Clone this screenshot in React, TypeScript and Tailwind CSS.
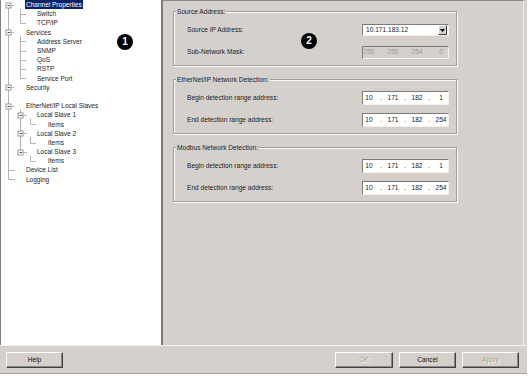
import { Fragment } from "react";

type TreeRow = { label: string; depth: number; selected?: boolean } | null;

const treeRows: TreeRow[] = [
  { label: "Channel Properties", depth: 0, selected: true },
  { label: "Switch", depth: 1 },
  { label: "TCP/IP", depth: 1 },
  { label: "Services", depth: 0 },
  { label: "Address Server", depth: 1 },
  { label: "SNMP", depth: 1 },
  { label: "QoS", depth: 1 },
  { label: "RSTP", depth: 1 },
  { label: "Service Port", depth: 1 },
  { label: "Security", depth: 0 },
  null,
  { label: "EtherNet/IP Local Slaves", depth: 0 },
  { label: "Local Slave 1", depth: 1 },
  { label: "Items", depth: 2 },
  { label: "Local Slave 2", depth: 1 },
  { label: "Items", depth: 2 },
  { label: "Local Slave 3", depth: 1 },
  { label: "Items", depth: 2 },
  { label: "Device List", depth: 0 },
  { label: "Logging", depth: 0 },
];

const ROW = 9.2;
const cy = (i: number) => Math.round(ROW * i + ROW / 2) + 0.5;

function ExpandBox({ x, y }: { x: number; y: number }) {
  return (
    <g>
      <rect x={x - 2.5} y={y - 2.5} width={5} height={5} fill="#fff" stroke="#9a9a9a" />
      <line x1={x - 1} y1={y} x2={x + 1.5} y2={y} stroke="#555" />
    </g>
  );
}

function TreeLines() {
  const tick = (x1: number, x2: number, i: number) => (
    <line key={`t${x1}-${i}`} x1={x1} y1={cy(i)} x2={x2} y2={cy(i)} />
  );
  return (
    <svg className="absolute left-0 top-0" width={60} height={190}>
      <g stroke="#b4b4b4" strokeWidth={1}>
        <line x1={8.5} y1={cy(0)} x2={8.5} y2={cy(19)} />
        <line x1={20.5} y1={cy(0) + 3} x2={20.5} y2={cy(2)} />
        <line x1={20.5} y1={cy(3) + 3} x2={20.5} y2={cy(8)} />
        <line x1={20.5} y1={cy(11) + 3} x2={20.5} y2={cy(16)} />
        <line x1={30.5} y1={cy(12) + 3} x2={30.5} y2={cy(13)} />
        <line x1={30.5} y1={cy(14) + 3} x2={30.5} y2={cy(15)} />
        <line x1={30.5} y1={cy(16) + 3} x2={30.5} y2={cy(17)} />
        {[0, 3, 9, 11].map((i) => tick(11, 14, i))}
        {[18, 19].map((i) => tick(8.5, 15, i))}
        {[1, 2, 4, 5, 6, 7, 8].map((i) => tick(20.5, 26, i))}
        {[12, 14, 16].map((i) => tick(23, 27, i))}
        {[13, 15, 17].map((i) => tick(30.5, 36, i))}
      </g>
      {[0, 3, 9, 11].map((i) => (
        <ExpandBox key={`b${i}`} x={8.5} y={cy(i)} />
      ))}
      {[12, 14, 16].map((i) => (
        <ExpandBox key={`c${i}`} x={20.5} y={cy(i)} />
      ))}
    </svg>
  );
}

function Badge({ n, className }: { n: string; className: string }) {
  return (
    <div
      className={`absolute flex h-[16px] w-[16px] items-center justify-center rounded-full bg-black text-[10px] font-bold leading-none text-white ${className}`}
    >
      {n}
    </div>
  );
}

function Tree() {
  const indent = ["pl-[25px]", "pl-[36px]", "pl-[47px]"];
  return (
    <div className="relative h-full w-[161px] bg-white shadow-[inset_1px_0_0_#7f7f7f]">
      <TreeLines />
      <div className="relative flex flex-col text-[6.5px] text-[#1c1c1c]">
        {treeRows.map((row, i) =>
          row ? (
            <div key={i} className={`flex h-[9.2px] items-center ${indent[row.depth]}`}>
              <span
                className={`px-[1px] leading-[9px] ${row.selected ? "bg-[#0a246a] text-white" : ""}`}
              >
                {row.label}
              </span>
            </div>
          ) : (
            <div key={i} className="h-[9.2px]" />
          ),
        )}
      </div>
      <Badge n="1" className="left-[117px] top-[34px]" />
    </div>
  );
}

const sunken =
  "border border-t-[#7b7b7b] border-l-[#7b7b7b] border-b-[#f4f2f0] border-r-[#f4f2f0]";

function IpField({ parts, disabled }: { parts: string[]; disabled?: boolean }) {
  return (
    <div
      className={`flex w-[87px] items-center ${sunken} ${
        disabled ? "h-[13px] bg-[#d5d0cb] text-[#9d9995]" : "h-[14px] bg-white text-[#222]"
      }`}
    >
      {parts.map((p, i) => (
        <Fragment key={i}>
          {i > 0 && <span className="w-[12px] text-center">.</span>}
          <span className="w-[12px] text-center">{p}</span>
        </Fragment>
      ))}
    </div>
  );
}

function Combo({ value }: { value: string }) {
  return (
    <div className={`flex h-[12px] w-[87px] items-center bg-white text-[#222] ${sunken}`}>
      <span className="flex-1 pl-[3px]">{value}</span>
      <div className="mr-[1px] flex h-[10px] w-[9px] items-center justify-center border border-t-white border-l-white border-b-[#404040] border-r-[#404040] bg-[#d5d0cb]">
        <svg width="5" height="3" viewBox="0 0 5 3">
          <path d="M0 0h5L2.5 3z" fill="#000" />
        </svg>
      </div>
    </div>
  );
}

function Group({ title, children }: { title: string; children: React.ReactNode }) {
  return (
    <div className="relative flex w-[284px] flex-col gap-[8px] border border-[#a19d99] pb-[6px] pt-[11px] shadow-[inset_1px_1px_0_#fbfaf9,1px_1px_0_#fbfaf9]">
      <span className="absolute -top-[5px] left-[2px] bg-[#d5d0cb] px-[1px] leading-[9px] text-[#222]">
        {title}
      </span>
      {children}
    </div>
  );
}

function FieldRow({ label, children }: { label: string; children: React.ReactNode }) {
  return (
    <div className="flex h-[14px] items-center pl-[13px]">
      <span className="w-[175px] text-[#222]">{label}</span>
      {children}
    </div>
  );
}

function Button({ label, disabled, className }: { label: string; disabled?: boolean; className: string }) {
  return (
    <button
      className={`h-[16px] border border-t-white border-l-white border-b-[#404040] border-r-[#404040] bg-[#d5d0cb] text-[6.6px] shadow-[inset_-1px_-1px_0_#8a8683] ${
        disabled ? "text-[#a29e9a] [text-shadow:1px_1px_0_#fff]" : "text-[#111]"
      } ${className}`}
    >
      {label}
    </button>
  );
}

export default function App() {
  return (
    <div className="h-[377px] w-[530px] bg-white font-['Liberation_Sans',Arial,sans-serif]">
      <div className="flex h-[374px] w-[527px] flex-col border-b border-[#a8a4a0] bg-[#d5d0cb]">
        <div className="flex h-[346px] border-b border-[#f4f2f0]">
          <Tree />
          <div className="relative flex w-[363px] flex-col gap-[13px] border-l-2 border-t border-r border-l-[#7b7b7b] border-t-[#8a8a8a] border-r-[#f0eeec] pl-[10px] pt-[10px] text-[6.6px]">
            <Group title="Source Address:">
              <FieldRow label="Source IP Address:">
                <Combo value="10.171.183.12" />
              </FieldRow>
              <FieldRow label="Sub-Network Mask:">
                <IpField parts={["255", "255", "254", "0"]} disabled />
              </FieldRow>
            </Group>
            <Group title="EtherNet/IP Network Detection:">
              <FieldRow label="Begin detection range address:">
                <IpField parts={["10", "171", "182", "1"]} />
              </FieldRow>
              <FieldRow label="End detection range address:">
                <IpField parts={["10", "171", "182", "254"]} />
              </FieldRow>
            </Group>
            <Group title="Modbus Network Detection:">
              <FieldRow label="Begin detection range address:">
                <IpField parts={["10", "171", "182", "1"]} />
              </FieldRow>
              <FieldRow label="End detection range address:">
                <IpField parts={["10", "171", "182", "254"]} />
              </FieldRow>
            </Group>
            <Badge n="2" className="left-[138px] top-[32px]" />
          </div>
        </div>
        <div className="flex flex-1 items-start pl-[6px] pr-[8px] pt-[6px]">
          <Button label="Help" className="w-[57px]" />
          <div className="ml-auto flex gap-[6px]">
            <Button label="OK" disabled className="w-[58px]" />
            <Button label="Cancel" className="w-[57px]" />
            <Button label="Apply" disabled className="w-[57px]" />
          </div>
        </div>
      </div>
    </div>
  );
}
